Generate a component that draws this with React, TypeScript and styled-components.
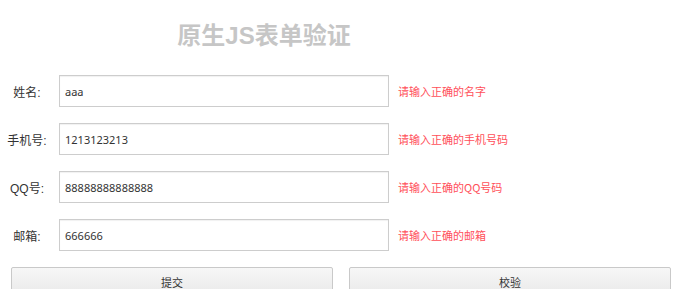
import * as React from "react";
import styled, { createGlobalStyle } from "styled-components";

const Global = createGlobalStyle`
  html, body {
    margin: 0;
    padding: 0;
    background: #fff;
  }
  body {
    font-family: "Noto Sans", "Noto Sans CJK SC", sans-serif;
    color: #333;
  }
`;

const Page = styled.main`
  width: 674px;
  height: 289px;
  overflow: hidden;
  display: flex;
  flex-direction: column;
`;

const Title = styled.h1`
  width: 528px;
  margin: 21px 0 0;
  text-align: center;
  font-family: "Liberation Sans", "Noto Sans CJK SC", sans-serif;
  font-size: 24px;
  line-height: 30px;
  font-weight: bold;
  color: #c6c6c6;
`;

const Form = styled.form`
  display: flex;
  flex-direction: column;
  gap: 16px;
  margin-top: 24px;
`;

const Row = styled.div`
  display: flex;
  align-items: center;
  height: 32px;
`;

const Label = styled.label`
  width: 54px;
  text-align: center;
  font-family: "Liberation Sans", "Noto Sans CJK SC", sans-serif;
  font-size: 12px;
  color: #333;
`;

const Field = styled.input`
  box-sizing: border-box;
  width: 330px;
  height: 32px;
  margin-left: 5px;
  padding: 0 5px;
  border: 1px solid #cdcdcd;
  box-shadow: inset 0 1px 1px rgba(0, 0, 0, 0.06);
  font-family: "Noto Sans", "Noto Sans CJK SC", sans-serif;
  font-size: 11px;
  color: #333;
  outline: none;
`;

const Error = styled.span`
  margin-left: 9px;
  font-family: "Noto Sans CJK SC", sans-serif;
  font-size: 11px;
  color: #ff4f5a;
`;

const Buttons = styled.div`
  display: flex;
  gap: 16px;
  padding: 0 3px 0 11px;
`;

const Button = styled.button`
  flex: 1 1 0;
  height: 30px;
  border: 1px solid #c9c9c9;
  border-radius: 2px;
  background: linear-gradient(#f7f7f7, #e9e9e9);
  font-family: "Noto Sans CJK SC", sans-serif;
  font-size: 11px;
  color: #333;
`;

const fields = [
  { label: "姓名:", value: "aaa", error: "请输入正确的名字" },
  { label: "手机号:", value: "1213123213", error: "请输入正确的手机号码" },
  { label: "QQ号:", value: "88888888888888", error: "请输入正确的QQ号码" },
  { label: "邮箱:", value: "666666", error: "请输入正确的邮箱" },
];

export default function App() {
  return (
    <Page>
      <Global />
      <Title>原生JS表单验证</Title>
      <Form onSubmit={e => e.preventDefault()}>
        {fields.map(f => (
          <Row key={f.label}>
            <Label>{f.label}</Label>
            <Field defaultValue={f.value} />
            <Error>{f.error}</Error>
          </Row>
        ))}
        <Buttons>
          <Button type="submit">提交</Button>
          <Button type="button">校验</Button>
        </Buttons>
      </Form>
    </Page>
  );
}
